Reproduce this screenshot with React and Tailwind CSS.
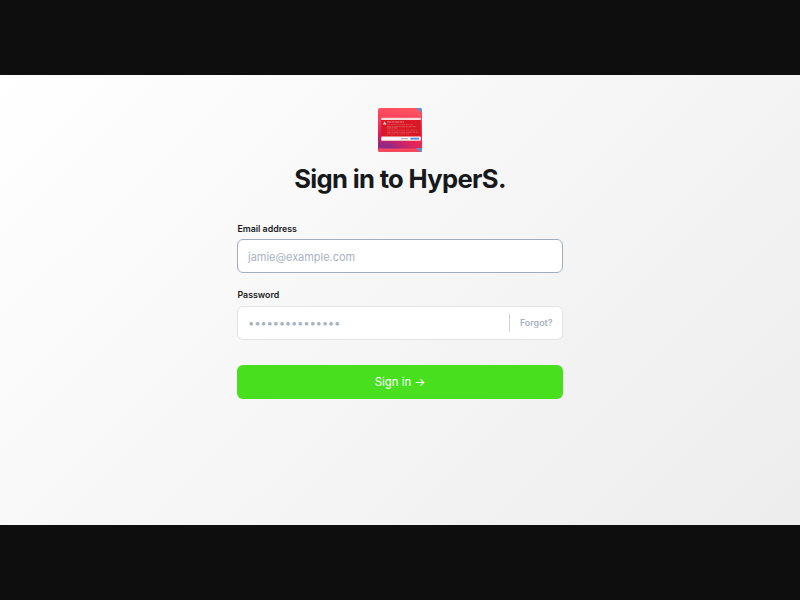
import React from "react";

function Logo() {
  return (
    <svg className="block size-11" viewBox="0 0 44 44" aria-label="HyperS">
      <defs>
        <linearGradient id="sky" x1="0.4" y1="0" x2="0.25" y2="1">
          <stop offset="0" stopColor="#ff5360" />
          <stop offset="0.35" stopColor="#f83a5c" />
          <stop offset="0.65" stopColor="#d51c62" />
          <stop offset="0.9" stopColor="#8c2a88" />
          <stop offset="1" stopColor="#a43678" />
        </linearGradient>
        <linearGradient id="warm" x1="0" y1="0" x2="1" y2="0">
          <stop offset="0.3" stopColor="#f02a50" stopOpacity="0" />
          <stop offset="1" stopColor="#f5284c" stopOpacity="0.9" />
        </linearGradient>
        <clipPath id="tile"><rect width="44" height="44" rx="2" /></clipPath>
      </defs>
      <g clipPath="url(#tile)">
        <rect width="44" height="44" fill="url(#sky)" />
        <rect y="24" width="44" height="20" fill="url(#warm)" />
        <path d="M38 0H44V4Q41 3 38 0Z" fill="#5793e0" />
        <rect y="40.5" width="44" height="3.5" fill="#f6475d" />
        <path d="M38 40L44 40V44H42Z" fill="#5a8fdc" />
        <rect x="3.3" y="9.7" width="39.5" height="23.2" rx="0.8" fill="#d81826" />
        <rect x="3.3" y="9.7" width="39.5" height="2.2" rx="0.5" fill="#f9dedf" />
        <rect x="3.3" y="28.6" width="39.5" height="4.2" rx="0.5" fill="#f7f2f4" />
        <path d="M6.6 13.4L8.5 16.4H4.8Z" fill="#f6d4d4" />
        <g stroke="#f3a3a6" strokeWidth="0.5">
          <path d="M9 14H26" strokeWidth="0.9" strokeDasharray="4 .5 3 .5" opacity="0.8" />
          <path d="M9 16.5H35M9 22.1H39M9 25.9H31" strokeDasharray="3 .7 5 .8" opacity="0.5" />
          <path d="M9 18.7H38M9 20H19M9 24.2H40" strokeDasharray="4 .6 2 .5" opacity="0.8" />
        </g>
        <path d="M23 30.7H30" stroke="#a8a7b2" strokeWidth="1" />
        <rect x="32.5" y="29.8" width="8.5" height="1.8" rx="0.3" fill="#458be9" />
      </g>
    </svg>
  );
}

export default function App() {
  return (
    <div className="flex h-[600px] w-[800px] flex-col bg-[#0e0e0e] py-[75px] font-['Inter',sans-serif]">
      <main className="flex h-[450px] flex-col items-center bg-linear-135 from-white to-[#ededed] pt-[33px]">
        <Logo />
        <h1 className="mt-[9px] text-[25.6px] leading-9 font-bold tracking-[-0.66px] whitespace-nowrap text-[#17191c]">Sign in to HyperS.</h1>
        <form className="mt-[25px] flex w-[326px] flex-col">
          <label className="h-[17px] pt-[0.5px] pl-[0.5px] text-[8.8px] leading-3 font-semibold text-[#17191c]">Email address</label>
          <div className="flex h-[34px] items-center rounded-[6px] border border-[#a0aec0] bg-white px-[10px] pt-[2px] text-[11px] tracking-[-0.03px] text-[#a8b3c3]">jamie@example.com</div>
          <label className="mt-4 h-[17px] pl-[0.5px] text-[8.8px] leading-3 font-semibold text-[#17191c]">Password</label>
          <div className="flex h-[34px] items-center justify-between rounded-[6px] border border-[#e2e3e6] bg-white pr-[9.5px] pl-[10px]">
            <span className="pt-[2px] text-[11.5px] tracking-[-0.33px] text-[#a8b3c3]">•••••••••••••••</span>
            <span className="flex h-[18px] items-center border-l border-[#cfd4dc] pl-[10px] text-[8.9px] font-semibold text-[#a8b3c3]">Forgot?</span>
          </div>
          <button type="button" className="mt-[25px] flex h-[34px] items-center justify-center rounded-[6px] bg-[#47df1e] pt-[2px] text-[11.4px] text-white">Sign in →</button>
        </form>
      </main>
    </div>
  );
}
